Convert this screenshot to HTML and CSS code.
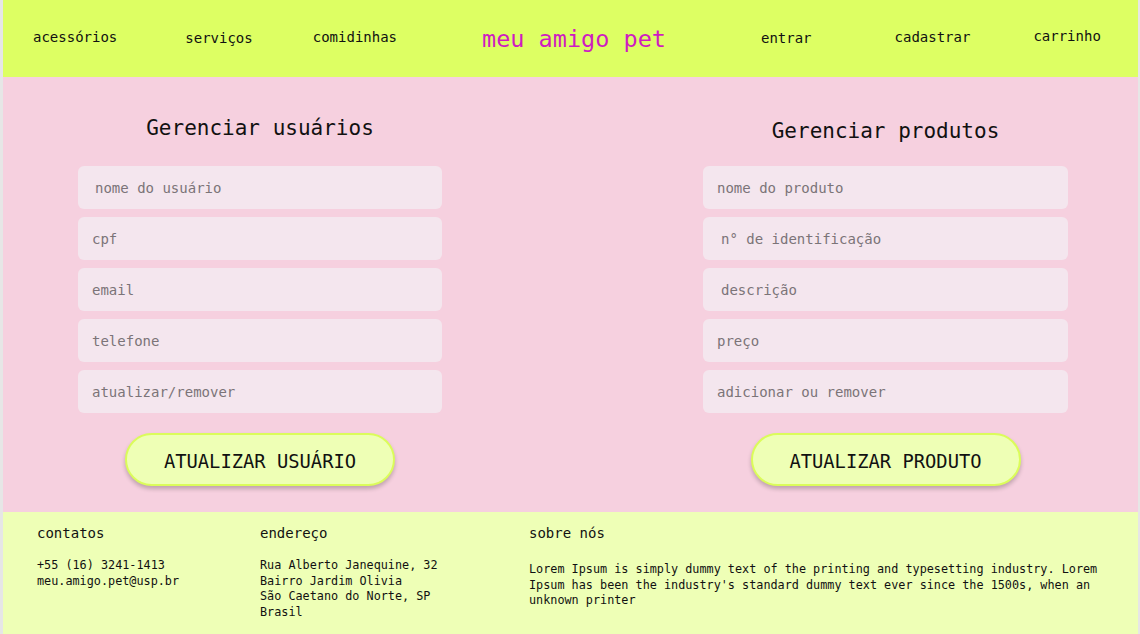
FILE: index.html
```html
<!DOCTYPE html>
<html lang="pt-BR">
<head>
<meta charset="utf-8">
<title>meu amigo pet</title>
<link rel="stylesheet" href="styles.css">
</head>
<body>
<div class="page">
  <header class="topbar">
    <a class="nav nav-1">acessórios</a>
    <a class="nav nav-2">serviços</a>
    <a class="nav nav-3">comidinhas</a>
    <a class="logo">meu amigo pet</a>
    <a class="nav nav-4">entrar</a>
    <a class="nav nav-5">cadastrar</a>
    <a class="nav nav-6">carrinho</a>
  </header>

  <main class="main">
    <section class="panel panel-left">
      <h2 class="panel-title">Gerenciar usuários</h2>
      <div class="fields">
        <input class="field field-indent" placeholder="nome do usuário">
        <input class="field" placeholder="cpf">
        <input class="field" placeholder="email">
        <input class="field" placeholder="telefone">
        <input class="field" placeholder="atualizar/remover">
      </div>
      <button class="btn">ATUALIZAR USUÁRIO</button>
    </section>
    <section class="panel panel-right">
      <h2 class="panel-title title-right">Gerenciar produtos</h2>
      <div class="fields">
        <input class="field" placeholder="nome do produto">
        <input class="field field-indent2" placeholder="n° de identificação">
        <input class="field field-indent2" placeholder="descrição">
        <input class="field" placeholder="preço">
        <input class="field" placeholder="adicionar ou remover">
      </div>
      <button class="btn">ATUALIZAR PRODUTO</button>
    </section>
  </main>

  <footer class="footer">
    <div class="fcol fcol-contact">
      <h3 class="fhead">contatos</h3>
      <p class="ftext">+55 (16) 3241-1413<br>meu.amigo.pet@usp.br</p>
    </div>
    <div class="fcol fcol-address">
      <h3 class="fhead">endereço</h3>
      <p class="ftext">Rua Alberto Janequine, 32<br>Bairro Jardim Olivia<br>São Caetano do Norte, SP<br>Brasil</p>
    </div>
    <div class="fcol fcol-about">
      <h3 class="fhead">sobre nós</h3>
      <p class="ftext ftext-about">Lorem Ipsum is simply dummy text of the printing and typesetting industry. Lorem Ipsum has been the industry's standard dummy text ever since the 1500s, when an unknown printer</p>
    </div>
  </footer>
</div>
</body>
</html>
```

FILE: styles.css
```css
* {
  box-sizing: border-box;
}

html, body {
  margin: 0;
  padding: 0;
}

body {
  background: #e6e6e6;
  font-family: "DejaVu Sans Mono", "Liberation Mono", monospace;
  color: #111;
}

.page {
  margin: 0 2px 0 3px;
  height: 634px;
  display: flex;
  flex-direction: column;
}

/* header */
.topbar {
  height: 77px;
  background: #ddff63;
  display: flex;
  align-items: center;
  padding-left: 30px;
  font-size: 14px;
}

.nav {
  color: #111;
  text-decoration: none;
  white-space: nowrap;
}

.nav-1 { margin-top: -3px; }
.nav-2 { margin-left: 68px; margin-top: -1px; }
.nav-3 { margin-left: 60px; margin-top: -3px; }
.nav-4 { margin-left: 95px; margin-top: -1px; }
.nav-5 { margin-left: 83px; margin-top: -3px; }
.nav-6 { margin-left: 63px; margin-top: -5px; }

.logo {
  margin-left: 85px;
  font-size: 23.5px;
  color: #cf1cc0;
  white-space: nowrap;
  margin-top: 0;
}

/* main */
.main {
  height: 435px;
  background: #f6d0df;
  display: flex;
  padding-left: 75px;
  gap: 261px;
}

.panel {
  width: 364px;
  display: flex;
  flex-direction: column;
  align-items: center;
}

.panel-right {
  width: 365px;
}

.panel-title {
  margin: 38px 0 0;
  height: 51px;
  font-size: 21px;
  font-weight: normal;
  line-height: 26px;
}

.title-right {
  margin-top: 41px;
  height: 48px;
}

.fields {
  width: 100%;
  display: flex;
  flex-direction: column;
  gap: 8px;
}

.field {
  width: 100%;
  height: 43px;
  border: none;
  border-radius: 6px;
  background: #f4e6ee;
  padding: 0 14px;
  font-family: "DejaVu Sans Mono", "Liberation Mono", monospace;
  font-size: 14px;
  color: #333;
  outline: none;
}

.field::placeholder {
  color: #7b7478;
}

.field-indent { padding-left: 17px; }
.field-indent2 { padding-left: 18px; }

.btn {
  margin-top: 20px;
  width: 270px;
  height: 53px;
  border-radius: 27px;
  border: 2px solid #dbfc5a;
  background: #eeffb5;
  box-shadow: 0 3px 4px rgba(0, 0, 0, 0.22);
  font-family: "DejaVu Sans Mono", "Liberation Mono", monospace;
  font-size: 18.8px;
  color: #111;
  letter-spacing: 0;
  padding: 3px 0 0;
}

/* footer */
.footer {
  flex: 1;
  background: #eeffb6;
  display: flex;
  padding-left: 34px;
}

.fcol {
  padding-top: 12px;
}

.fcol-contact { width: 223px; }
.fcol-address { width: 269px; }
.fcol-about { width: 590px; }

.fhead {
  margin: 0;
  font-size: 14px;
  font-weight: normal;
  line-height: 18px;
}

.ftext {
  margin: 16px 0 0;
  font-size: 11.8px;
  line-height: 15.5px;
}

.ftext-about {
  margin-top: 20px;
}
```
